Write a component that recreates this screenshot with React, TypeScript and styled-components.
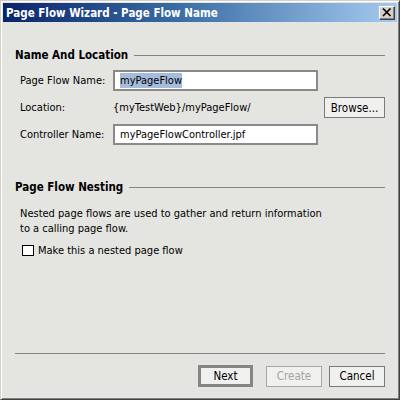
import React from 'react'
import styled, { createGlobalStyle } from 'styled-components'

const GlobalStyle = createGlobalStyle`
  html, body {
    margin: 0;
    padding: 0;
    background: #d4d0c8;
  }
`

const font = `"DejaVu Sans Condensed", "Liberation Sans", sans-serif`

const Window = styled.div`
  box-sizing: border-box;
  width: 400px;
  height: 400px;
  display: flex;
  flex-direction: column;
  font-family: ${font};
  font-size: 11px;
  color: #000;
  border-top: 1px solid #d4d0c8;
  border-left: 1px solid #d4d0c8;
  border-right: 1px solid #404040;
  border-bottom: 1px solid #404040;
  box-shadow: inset 1px 1px 0 #fff, inset -1px -1px 0 #808080;
  padding: 2px;
  background-color: #e4e4e1;
`

const TitleBar = styled.div`
  height: 19px;
  display: flex;
  align-items: center;
  justify-content: space-between;
  padding: 0 2px 0 3px;
  background: linear-gradient(to right, #0a246a 0%, #3a6ea5 45%, #a6caf0 100%);
`

const Title = styled.span`
  color: #fff;
  font-weight: bold;
  font-size: 11.5px;
`

const CloseButton = styled.div`
  box-sizing: border-box;
  width: 16px;
  height: 14px;
  background: #d4d0c8;
  border-top: 1px solid #fff;
  border-left: 1px solid #fff;
  border-right: 1px solid #404040;
  border-bottom: 1px solid #404040;
  box-shadow: inset -1px -1px 0 #808080;
  display: flex;
  align-items: center;
  justify-content: center;
`

const Body = styled.div`
  flex: 1;
  display: flex;
  flex-direction: column;
  padding: 0 12px 0 12px;
`

const SectionHeader = styled.div<{ top: number }>`
  display: flex;
  align-items: center;
  gap: 6px;
  margin-top: ${(p) => p.top}px;
  height: 14px;
  font-weight: bold;
  font-size: 11.5px;
`

const Rule = styled.div`
  flex: 1;
  height: 1px;
  background: #858585;
`

const FormGrid = styled.div`
  display: grid;
  grid-template-columns: 93px 211px 61px;
  row-gap: 6px;
  grid-auto-rows: 21px;
  align-items: center;
  margin: 8px 0 0 5px;
`

const Label = styled.span``

const TextBox = styled.div`
  box-sizing: border-box;
  width: 205px;
  height: 21px;
  border: 2px solid #8a8a8a;
  background: #fff;
  display: flex;
  align-items: center;
  padding-left: 5px;
`

const Selected = styled.span`
  background: #a6bcdc;
  line-height: 15px;
`

const PlainValue = styled.span``

const Button = styled.div<{ isDefault?: boolean; disabled?: boolean }>`
  box-sizing: border-box;
  height: ${(p) => (p.isDefault ? 22 : 21)}px;
  width: ${(p) => (p.isDefault ? 55 : 56)}px;
  display: flex;
  align-items: center;
  justify-content: center;
  background: #f0f0ee;
  border: ${(p) =>
    p.isDefault ? '3px solid #858585' : p.disabled ? '1px solid #a8a8a8' : '1px solid #7a7a7a'};
  color: ${(p) => (p.disabled ? '#a4a4a4' : '#000')};
  font-size: 11.5px;
`

const BrowseButton = styled(Button)`
  width: 61px;
`

const Description = styled.p`
  margin: 12px 0 0 5px;
  line-height: 15px;
`

const CheckRow = styled.label`
  display: flex;
  align-items: center;
  gap: 4px;
  margin: 8px 0 0 7px;
  height: 13px;
`

const CheckBox = styled.span`
  box-sizing: border-box;
  width: 12px;
  height: 11px;
  border: 1px solid #000;
  background: #fff;
`

const Footer = styled.div`
  margin-top: auto;
  display: flex;
  flex-direction: column;
  padding-bottom: 10px;
`

const FooterRule = styled.div`
  height: 1px;
  background: #858585;
  margin-bottom: 11px;
`

const ButtonRow = styled.div`
  display: flex;
  justify-content: flex-end;
  align-items: center;
  gap: 7px;
  & > :nth-child(2) {
    margin-left: 6px;
  }
`

export default function App() {
  return (
    <>
      <GlobalStyle />
      <Window>
        <TitleBar>
          <Title>Page Flow Wizard - Page Flow Name</Title>
          <CloseButton>
            <svg width="10" height="9" viewBox="0 0 10 9">
              <path d="M1 0.5 L8.5 8 M8.5 0.5 L1 8" stroke="#000" strokeWidth="1.6" />
            </svg>
          </CloseButton>
        </TitleBar>
        <Body>
          <SectionHeader top={26}>
            Name And Location
            <Rule />
          </SectionHeader>
          <FormGrid>
            <Label>Page Flow Name:</Label>
            <TextBox>
              <Selected>myPageFlow</Selected>
            </TextBox>
            <span />
            <Label>Location:</Label>
            <PlainValue>{'{myTestWeb}/myPageFlow/'}</PlainValue>
            <BrowseButton>Browse...</BrowseButton>
            <Label>Controller Name:</Label>
            <TextBox>myPageFlowController.jpf</TextBox>
            <span />
          </FormGrid>
          <SectionHeader top={35}>
            Page Flow Nesting
            <Rule />
          </SectionHeader>
          <Description>
            Nested page flows are used to gather and return information
            <br />
            to a calling page flow.
          </Description>
          <CheckRow>
            <CheckBox />
            Make this a nested page flow
          </CheckRow>
          <Footer>
            <FooterRule />
            <ButtonRow>
              <Button isDefault>Next</Button>
              <Button disabled>Create</Button>
              <Button>Cancel</Button>
            </ButtonRow>
          </Footer>
        </Body>
      </Window>
    </>
  )
}
